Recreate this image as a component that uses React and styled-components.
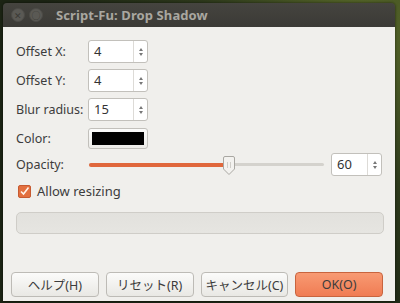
import React from 'react';
import styled, { createGlobalStyle } from 'styled-components';

const GlobalStyle = createGlobalStyle`
  html, body { margin: 0; padding: 0; }
  body {
    font-family: "Noto Sans", "Noto Sans CJK JP", sans-serif;
    width: 400px;
    height: 303px;
    overflow: hidden;
  }
`;

const Page = styled.div`
  width: 400px;
  height: 303px;
  box-sizing: border-box;
  padding: 3px 5px 2px 3px;
  background: radial-gradient(circle at 90% 10%, #5a6a2a 0%, #2e3a1c 35%, #1c2414 70%),
    #232b18;
`;

const Window = styled.div`
  height: 298px;
  display: flex;
  flex-direction: column;
  border-radius: 4px 4px 0 0;
  overflow: hidden;
  box-shadow: 0 0 3px rgba(0, 0, 0, 0.6);
`;

const TitleBar = styled.div`
  height: 24px;
  flex: none;
  background: linear-gradient(#45443f, #3b3a36);
  display: flex;
  align-items: center;
  padding-left: 8px;
  gap: 4px;
`;

const WinButton = styled.div`
  width: 12px;
  height: 12px;
  border-radius: 50%;
  background: #5a5954;
  border: 1px solid #4c4b47;
  display: flex;
  align-items: center;
  justify-content: center;
  color: #3a3935;
  font-size: 9px;
  line-height: 1;
`;

const Title = styled.div`
  margin-left: 9px;
  color: #a9a7a0;
  font-weight: bold;
  font-size: 13px;
  letter-spacing: 0.1px;
`;

const Body = styled.div`
  flex: 1;
  background: #f0efec;
  padding: 13px 12px 0 10px;
  display: flex;
  flex-direction: column;
  color: #3c3c3c;
  font-size: 12.5px;
`;

const Form = styled.div`
  display: grid;
  grid-template-columns: 72px 1fr;
  row-gap: 6px;
  padding-left: 3px;
  align-items: center;
`;

const Label = styled.div`
  line-height: 23px;
  ${p => p.width && `width: ${p.width}px;`}
`;

const SpinBox = styled.div`
  width: ${p => p.width || 60}px;
  height: 23px;
  box-sizing: border-box;
  background: #fff;
  border: 1px solid #c2c0bb;
  border-radius: 3px;
  display: flex;
  align-items: stretch;
  margin-left: ${p => p.offset || 0}px;
`;

const SpinValue = styled.div`
  flex: 1;
  padding-left: 5px;
  line-height: 21px;
  font-size: 13px;
  color: #333;
`;

const SpinArrows = styled.div`
  width: 13px;
  border-left: 1px solid #dddbd7;
  display: flex;
  flex-direction: column;
  align-items: center;
  justify-content: center;
  gap: 2px;
`;

const Arrow = styled.div`
  width: 0;
  height: 0;
  border-left: 2px solid transparent;
  border-right: 2px solid transparent;
  ${p => (p.down ? 'border-top: 3px solid #777;' : 'border-bottom: 3px solid #777;')}
`;

const ColorButton = styled.div`
  width: 60px;
  height: 21px;
  box-sizing: border-box;
  border: 1px solid #c2c0bb;
  border-radius: 3px;
  background: linear-gradient(#fbfbfa, #ecebe8);
  padding: 3px;
  display: flex;
`;

const Swatch = styled.div`
  flex: 1;
  background: #000;
`;

const OpacityRow = styled.div`
  display: flex;
  align-items: center;
  padding-left: 3px;
  margin-top: 3px;
  height: 23px;
`;

const SliderWrap = styled.div`
  width: 235px;
  margin-left: 1px;
  height: 20px;
  position: relative;
  display: flex;
  align-items: center;
`;

const Track = styled.div`
  flex: 1;
  height: 3px;
  border-radius: 2px;
  background: #d4d2cd;
  display: flex;
`;

const Fill = styled.div`
  height: 4px;
  margin-top: -0.5px;
  border-radius: 2px;
  background: #e0673c;
`;

const Thumb = styled.svg`
  position: absolute;
  top: 1px;
`;

const CheckRow = styled.div`
  display: flex;
  align-items: center;
  gap: 6px;
  margin-top: 6px;
  padding-left: 5px;
  font-size: 13px;
`;

const CheckBox = styled.div`
  width: 13px;
  height: 13px;
  border-radius: 2px;
  background: #e3703f;
  border: 1px solid #c65a31;
  box-sizing: border-box;
  display: flex;
  align-items: center;
  justify-content: center;
`;

const Progress = styled.div`
  margin: 12px 0 0 3px;
  width: 368px;
  height: 22px;
  box-sizing: border-box;
  border: 1px solid #cfcdc8;
  border-radius: 5px;
  background: linear-gradient(#e2e1dd, #e6e5e1);
`;

const ButtonRow = styled.div`
  margin-top: auto;
  margin-bottom: 4px;
  margin-left: -2px;
  display: flex;
  gap: 7px;
`;

const Button = styled.div`
  width: 89px;
  height: 25px;
  box-sizing: border-box;
  border-radius: 4px;
  border: 1px solid ${p => (p.primary ? '#c8643e' : '#bdbbb6')};
  background: ${p =>
    p.primary
      ? 'linear-gradient(#f89a73, #f07c53)'
      : 'linear-gradient(#fbfbfa, #e9e8e4)'};
  display: flex;
  align-items: center;
  justify-content: center;
  font-size: 12.5px;
  color: #3c3c3c;
`;

function Spin({ value, width, offset }) {
  return (
    <SpinBox width={width} offset={offset}>
      <SpinValue>{value}</SpinValue>
      <SpinArrows>
        <Arrow />
        <Arrow down />
      </SpinArrows>
    </SpinBox>
  );
}

export default function App() {
  const value = 60;
  const trackWidth = 235;
  const thumbWidth = 12;
  const pos = Math.round(((trackWidth - thumbWidth) * value) / 100);

  return (
    <Page>
      <GlobalStyle />
      <Window>
        <TitleBar>
          <WinButton>✕</WinButton>
          <WinButton>○</WinButton>
          <Title>Script-Fu: Drop Shadow</Title>
        </TitleBar>
        <Body>
          <Form>
            <Label>Offset X:</Label>
            <Spin value="4" />
            <Label>Offset Y:</Label>
            <Spin value="4" />
            <Label>Blur radius:</Label>
            <Spin value="15" />
            <Label>Color:</Label>
            <ColorButton>
              <Swatch />
            </ColorButton>
          </Form>
          <OpacityRow>
            <Label width={72}>Opacity:</Label>
            <SliderWrap>
              <Track>
                <Fill style={{ width: pos + thumbWidth / 2 }} />
              </Track>
              <Thumb width="12" height="19" viewBox="0 0 12 19" style={{ left: pos }}>
                <path
                  d="M2 0.5 H10 Q11.5 0.5 11.5 2 V13 L6 18.5 L0.5 13 V2 Q0.5 0.5 2 0.5 Z"
                  fill="#f3f2ef"
                  stroke="#a9a7a2"
                />
                <path d="M4.5 6 V12 M7.5 6 V12" stroke="#cfcdc8" />
              </Thumb>
            </SliderWrap>
            <Spin value="60" width={51} offset={7} />
          </OpacityRow>
          <CheckRow>
            <CheckBox>
              <svg width="11" height="11" viewBox="0 0 11 11">
                <path d="M2 5.5 L4.5 8 L9.5 1.5" fill="none" stroke="#fff3ea" strokeWidth="1.6" />
              </svg>
            </CheckBox>
            Allow resizing
          </CheckRow>
          <Progress />
          <ButtonRow>
            <Button>ヘルプ(H)</Button>
            <Button>リセット(R)</Button>
            <Button>キャンセル(C)</Button>
            <Button primary>OK(O)</Button>
          </ButtonRow>
        </Body>
      </Window>
    </Page>
  );
}
